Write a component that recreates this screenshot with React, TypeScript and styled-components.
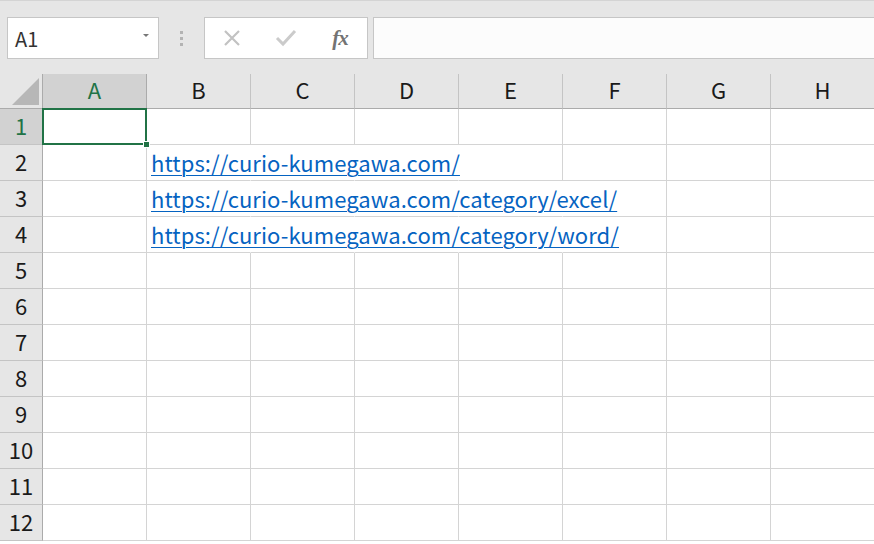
import React from 'react';
import styled, { createGlobalStyle } from 'styled-components';

const GlobalStyle = createGlobalStyle`
  html, body {
    margin: 0;
    padding: 0;
    background: #ffffff;
    overflow: hidden;
  }
  * {
    box-sizing: border-box;
  }
`;

const Page = styled.div`
  width: 874px;
  height: 544px;
  overflow: hidden;
  font-family: "Noto Sans CJK JP", "Noto Sans", sans-serif;
  background: #ffffff;
`;

const TopBar = styled.div`
  height: 74px;
  background: #e6e6e6;
  border-top: 1px solid #d4d4d4;
  padding-top: 16px;
  display: flex;
  align-items: flex-start;
`;

const NameBox = styled.div`
  margin-left: 7px;
  width: 152px;
  height: 42px;
  background: #ffffff;
  border: 1px solid #c6c6c6;
  display: flex;
  align-items: center;
  justify-content: space-between;
  padding: 0 9px 0 7px;
  font-size: 20px;
  color: #333333;
`;

const DropArrow = styled.span`
  width: 0;
  height: 0;
  border-left: 3px solid transparent;
  border-right: 3px solid transparent;
  border-top: 3px solid #777777;
  margin-bottom: 6px;
`;

const Grip = styled.div`
  width: 45px;
  height: 42px;
  display: flex;
  flex-direction: column;
  align-items: center;
  justify-content: center;
  gap: 3px;
`;

const GripDot = styled.span`
  width: 3px;
  height: 3px;
  background: #b3b3b3;
`;

const FormulaButtons = styled.div`
  width: 164px;
  height: 42px;
  background: #ffffff;
  border: 1px solid #c6c6c6;
  display: flex;
  align-items: center;
  gap: 24px;
  padding-left: 12px;
`;

const IconSlot = styled.span<{ $color: string }>`
  width: 30px;
  display: flex;
  justify-content: center;
  align-items: center;
  color: ${(p) => p.$color};
`;

const Fx = styled.span`
  font-family: "Liberation Serif", "DejaVu Serif", serif;
  font-style: italic;
  font-weight: bold;
  font-size: 21px;
  color: #737373;
  letter-spacing: -1px;
`;

const FormulaInput = styled.div`
  flex: 1;
  margin-left: 5px;
  height: 42px;
  background: #fcfcfc;
  border: 1px solid #c6c6c6;
  border-right: none;
`;

const Sheet = styled.div`
  display: grid;
  grid-template-columns: 43px repeat(8, 104px);
  grid-template-rows: 35px repeat(12, 36px);
  width: 874px;
  overflow: hidden;
`;

const Corner = styled.div`
  background: #e6e6e6;
  border-right: 1px solid #ababab;
  border-bottom: 1px solid #ababab;
  display: flex;
  align-items: flex-end;
  justify-content: flex-end;
  padding: 0 3px 3px 0;
`;

const Triangle = styled.span`
  width: 0;
  height: 0;
  border-left: 27px solid transparent;
  border-bottom: 27px solid #b7b7b7;
`;

const ColHeader = styled.div<{ $active?: boolean }>`
  background: ${(p) => (p.$active ? '#d2d2d2' : '#e6e6e6')};
  color: ${(p) => (p.$active ? '#217346' : '#1a1a1a')};
  border-right: 1px solid ${(p) => (p.$active ? '#ababab' : '#c4c4c4')};
  border-bottom: 1px solid ${(p) => (p.$active ? '#217346' : '#ababab')};
  font-size: 22px;
  display: flex;
  align-items: center;
  justify-content: center;
  padding-bottom: 4px;
`;

const RowHeader = styled.div<{ $active?: boolean }>`
  background: ${(p) => (p.$active ? '#d2d2d2' : '#e6e6e6')};
  color: ${(p) => (p.$active ? '#217346' : '#1a1a1a')};
  border-right: 1px solid ${(p) => (p.$active ? '#217346' : '#ababab')};
  border-bottom: 1px solid #c4c4c4;
  font-size: 22px;
  display: flex;
  align-items: center;
  justify-content: center;
  padding-bottom: 3px;
`;

const Cell = styled.div<{ $spill?: boolean }>`
  border-right: 1px solid ${(p) => (p.$spill ? 'transparent' : '#d4d4d4')};
  border-bottom: 1px solid #d4d4d4;
  white-space: nowrap;
  overflow: visible;
  font-size: 22px;
  display: flex;
  align-items: flex-end;
  padding: 0 0 7px 4px;
`;

const SelectedCell = styled(Cell)`
  position: relative;
`;

const SelectionFrame = styled.span`
  position: absolute;
  left: -1px;
  top: -1px;
  right: -1px;
  bottom: -1px;
  border: 2px solid #217346;
  z-index: 2;
`;

const FillHandle = styled.span`
  position: absolute;
  right: -4px;
  bottom: -4px;
  width: 7px;
  height: 7px;
  background: #217346;
  border: 1px solid #ffffff;
  z-index: 3;
`;

const Link = styled.a`
  color: #0563c1;
  text-decoration: underline;
  text-underline-offset: 3px;
  text-decoration-thickness: 1px;
  letter-spacing: 0.08px;
  line-height: 1;
  position: relative;
  z-index: 1;
`;

const columns = ['A', 'B', 'C', 'D', 'E', 'F', 'G', 'H'];

const links: Record<number, { url: string; spill: number }> = {
  2: { url: 'https://curio-kumegawa.com/', spill: 3 },
  3: { url: 'https://curio-kumegawa.com/category/excel/', spill: 4 },
  4: { url: 'https://curio-kumegawa.com/category/word/', spill: 4 },
};

const CrossIcon = () => (
  <svg width="20" height="20" viewBox="0 0 20 20">
    <path d="M3 3 L17 17 M17 3 L3 17" stroke="currentColor" strokeWidth="2.2" fill="none" />
  </svg>
);

const CheckIcon = () => (
  <svg width="22" height="20" viewBox="0 0 22 20">
    <path d="M2 10 L8 16 L20 3" stroke="currentColor" strokeWidth="3" fill="none" />
  </svg>
);

const App: React.FC = () => {
  const rows = Array.from({ length: 12 }, (_, i) => i + 1);

  return (
    <Page>
      <GlobalStyle />
      <TopBar>
        <NameBox>
          <span>A1</span>
          <DropArrow />
        </NameBox>
        <Grip>
          <GripDot />
          <GripDot />
          <GripDot />
        </Grip>
        <FormulaButtons>
          <IconSlot $color="#c2c2c2">
            <CrossIcon />
          </IconSlot>
          <IconSlot $color="#cbcbcb">
            <CheckIcon />
          </IconSlot>
          <IconSlot $color="#737373">
            <Fx>fx</Fx>
          </IconSlot>
        </FormulaButtons>
        <FormulaInput />
      </TopBar>
      <Sheet>
        <Corner>
          <Triangle />
        </Corner>
        {columns.map((c) => (
          <ColHeader key={c} $active={c === 'A'}>
            {c}
          </ColHeader>
        ))}
        {rows.map((r) => {
          const link = links[r];
          return (
            <React.Fragment key={r}>
              <RowHeader $active={r === 1}>{r}</RowHeader>
              {columns.map((c, ci) => {
                if (r === 1 && ci === 0) {
                  return (
                    <SelectedCell key={c}>
                      <SelectionFrame />
                      <FillHandle />
                    </SelectedCell>
                  );
                }
                const spill = link ? ci >= 1 && ci <= link.spill : false;
                return (
                  <Cell key={c} $spill={spill}>
                    {link && ci === 1 ? <Link>{link.url}</Link> : null}
                  </Cell>
                );
              })}
            </React.Fragment>
          );
        })}
      </Sheet>
    </Page>
  );
};

export default App;
